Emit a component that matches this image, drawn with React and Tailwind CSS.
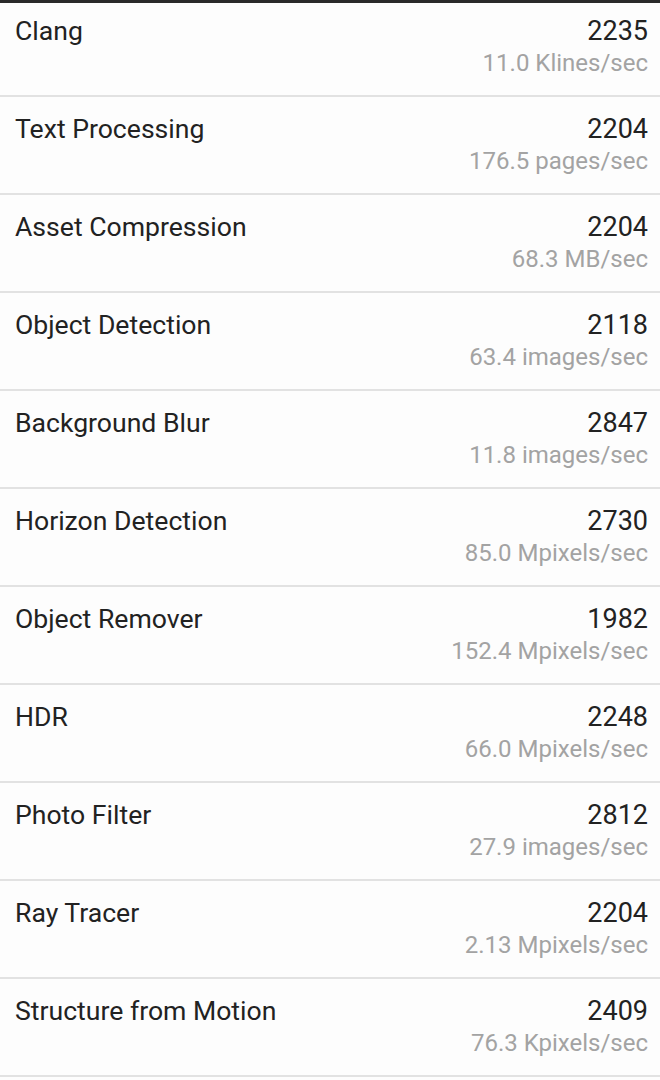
import React from 'react';

const rows = [
  ['Clang', '2235', '11.0 Klines/sec'],
  ['Text Processing', '2204', '176.5 pages/sec'],
  ['Asset Compression', '2204', '68.3 MB/sec'],
  ['Object Detection', '2118', '63.4 images/sec'],
  ['Background Blur', '2847', '11.8 images/sec'],
  ['Horizon Detection', '2730', '85.0 Mpixels/sec'],
  ['Object Remover', '1982', '152.4 Mpixels/sec'],
  ['HDR', '2248', '66.0 Mpixels/sec'],
  ['Photo Filter', '2812', '27.9 images/sec'],
  ['Ray Tracer', '2204', '2.13 Mpixels/sec'],
  ['Structure from Motion', '2409', '76.3 Kpixels/sec'],
];

const App = () => {
  return (
    <div className="min-h-screen bg-[#fdfdfd] font-['Roboto',sans-serif]">
      {/* top edge */}
      <div className="h-[3px] bg-[#2a2a2a]"></div>

      {rows.map(([name, score, rate], i) => (
        <div
          key={name}
          className={`flex justify-between border-b-2 border-[#e2e2e2] pl-[15px] pr-[12px] ${i === 0 ? 'h-[94px] pt-[12px]' : 'h-[98px] pt-[16px]'}`}
        >
          <div className="text-[26.6px] leading-[32px] text-[#222]">{name}</div>
          <div className="flex flex-col items-end">
            <div className="text-[27px] leading-[32px] text-[#222]">{score}</div>
            <div className="text-[24px] leading-[32px] text-[#a3a3a3]">{rate}</div>
          </div>
        </div>
      ))}
    </div>
  );
};

export default App;
